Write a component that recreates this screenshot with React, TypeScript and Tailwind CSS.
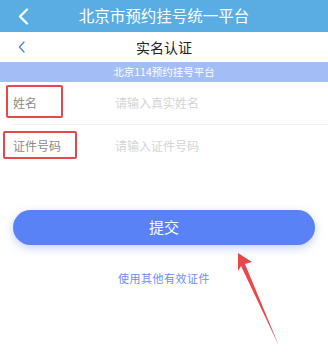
export default function App() {
  return (
    <div
      className="relative w-[328px] h-[364px] overflow-hidden bg-white"
      style={{ fontFamily: '"Noto Sans CJK SC", "Noto Sans", sans-serif' }}
    >
      {/* App bar */}
      <div className="grid grid-cols-[48px_1fr_48px] items-center h-[32px] bg-[#5aade3]">
        <div className="pl-[18px]">
          <svg width="11" height="17" viewBox="0 0 11 17" fill="none">
            <path d="M9 1.5 2 8.5l7 7" stroke="white" strokeWidth="2.2" strokeLinecap="round" strokeLinejoin="round" />
          </svg>
        </div>
        <div className="text-center text-white text-[15.5px] leading-none">北京市预约挂号统一平台</div>
        <div />
      </div>

      {/* Page title */}
      <div className="grid grid-cols-[48px_1fr_48px] items-center h-[30px] bg-white">
        <div className="pl-[18px]">
          <svg width="7" height="12" viewBox="0 0 7 12" fill="none">
            <path d="M6 1 1.5 6 6 11" stroke="#4c7ff0" strokeWidth="1.3" strokeLinecap="round" strokeLinejoin="round" />
          </svg>
        </div>
        <div className="text-center text-[#222] text-[14px] leading-none">实名认证</div>
        <div />
      </div>

      {/* Banner */}
      <div className="h-[20px] bg-[#a3bdf7] text-center text-white text-[10.5px] leading-[20px]">北京114预约挂号平台</div>

      {/* Form */}
      <div className="flex items-center h-[42px] pl-[13px]">
        <span className="w-[102px] text-[12px] text-[#8a8a8a]">姓名</span>
        <span className="text-[12px] text-[#d4d4d4]">请输入真实姓名</span>
      </div>
      <div className="ml-[13px] h-px bg-[#f0f0f0]" />
      <div className="flex items-center h-[42px] pl-[13px]">
        <span className="w-[102px] text-[12px] text-[#8a8a8a]">证件号码</span>
        <span className="text-[12px] text-[#d4d4d4]">请输入证件号码</span>
      </div>

      <button className="mt-[43px] mx-[13px] w-[302px] h-[35px] rounded-full bg-[#5a82f7] text-white text-[15px] shadow-[0_3px_10px_rgba(90,130,247,0.35)]">
        提交
      </button>

      <div className="mt-[25px] text-center text-[11px] leading-[16px] text-[#6b8ff0] tracking-[0.5px]">使用其他有效证件</div>

      {/* Annotations */}
      <div className="absolute left-[6px] top-[85px] w-[57px] h-[33px] border-[2.5px] border-[#e8474b] rounded-[2px]" />
      <div className="absolute left-[3px] top-[131px] w-[74px] h-[28px] border-[2.5px] border-[#e8474b] rounded-[2px]" />
      <svg className="absolute left-0 top-0" width="328" height="364" viewBox="0 0 328 364">
        <polygon points="238,253 252,262 245,264 279,346 241,266 238,271" fill="#e8474b" />
      </svg>
    </div>
  );
}
